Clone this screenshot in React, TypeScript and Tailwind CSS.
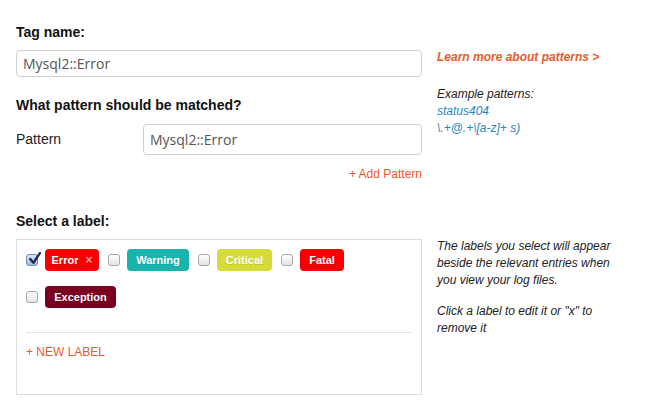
import React from 'react';

type Label = { name: string; color: string; width: string; checked?: boolean; removable?: boolean };

const labels: Label[] = [
  { name: 'Error', color: 'bg-[#f70000]', width: 'w-[54px]', checked: true, removable: true },
  { name: 'Warning', color: 'bg-[#19b4ae]', width: 'w-[62px]' },
  { name: 'Critical', color: 'bg-[#d5dc3a]', width: 'w-[55px]' },
  { name: 'Fatal', color: 'bg-[#f70000]', width: 'w-[44px]' },
  { name: 'Exception', color: 'bg-[#7a0021]', width: 'w-[71px]' },
];

const Checkbox = ({ checked }: { checked?: boolean }) => (
  <span
    className={`relative inline-block w-3 h-3 rounded-[3px] border ${
      checked
        ? 'border-[#6d8bb5] bg-gradient-to-b from-[#d7e6f6] to-[#9dbce0]'
        : 'border-[#a9a9a9] bg-gradient-to-b from-white to-[#e3e3e3]'
    }`}
  >
    {checked && (
      <svg viewBox="0 0 12 12" className="absolute -top-[3px] left-[1px] w-[13px] h-[13px]">
        <path d="M2 6.5 L5 10 L11 1" fill="none" stroke="#1d2b4f" strokeWidth="2.2" strokeLinecap="round" strokeLinejoin="round" />
      </svg>
    )}
  </span>
);

const LabelBadge = ({ label }: { label: Label }) => (
  <div className="flex items-center gap-[7px]">
    <Checkbox checked={label.checked} />
    <span
      className={`${label.color} ${label.width} h-[22px] rounded-[4px] flex items-center justify-center gap-[7px] text-[11px] font-bold text-white [text-shadow:0_1px_0_rgba(0,0,0,0.15)]`}
    >
      {label.name}
      {label.removable && <span className="text-[#ff9a9a] text-[12px]">×</span>}
    </span>
  </div>
);

export default function App() {
  return (
    <div className="w-[649px] h-[409px] bg-white flex gap-[15px] pl-4 pt-[24px] font-['Liberation_Sans',Arial,sans-serif] text-[#111]">
      {/* Left: form */}
      <div className="w-[406px] flex flex-col">
        <h3 className="text-[14px] leading-4 font-bold">Tag name:</h3>
        <div className="mt-[10px] h-[27px] border border-[#cfcfcf] rounded-[4px] flex items-center px-[6px] font-['Open_Sans',sans-serif] text-[14px] text-[#555]">
          Mysql2::Error
        </div>

        <h3 className="mt-[20px] text-[14px] leading-4 font-bold">What pattern should be matched?</h3>
        <div className="mt-[11px] flex items-center">
          <span className="w-[127px] text-[14px] text-[#222]">Pattern</span>
          <div className="flex-1 h-[31px] border border-[#cfcfcf] rounded-[4px] flex items-center px-[6px] font-['Open_Sans',sans-serif] text-[14px] text-[#555]">
            Mysql2::Error
          </div>
        </div>
        <div className="mt-[11px] text-right text-[12px] leading-4 text-[#ec5a2c]">+ Add Pattern</div>

        <h3 className="mt-[31px] text-[14px] leading-4 font-bold">Select a label:</h3>
        <div className="mt-[10px] h-[156px] border border-[#dedede] px-[9px] pt-[9px]">
          <div className="flex flex-wrap gap-x-[9px] gap-y-[15px]">
            {labels.map((l) => (
              <LabelBadge key={l.name} label={l} />
            ))}
          </div>
          <div className="mt-[24px] border-t border-[#e3e3e3]" />
          <div className="mt-[11px] text-[12px] leading-4 text-[#ec5a2c]">+ NEW LABEL</div>
        </div>
      </div>

      {/* Right: help */}
      <div className="w-[186px] flex flex-col text-[12px] italic text-[#222]">
        <a className="mt-[25px] leading-4 font-bold text-[#ec5a2c]">Learn more about patterns &gt;</a>
        <div className="mt-[21px] leading-[17px]">
          <p>Example patterns:</p>
          <p className="text-[#2a85c1]">status404</p>
          <p className="text-[#2a85c1]">\.+@.+\[a-z]+ s)</p>
        </div>
        <p className="mt-[101px] leading-[17px]">
          The labels you select will appear beside the relevant entries when you view your log files.
        </p>
        <p className="mt-[14px] leading-[17px]">Click a label to edit it or "x" to remove it</p>
      </div>
    </div>
  );
}
